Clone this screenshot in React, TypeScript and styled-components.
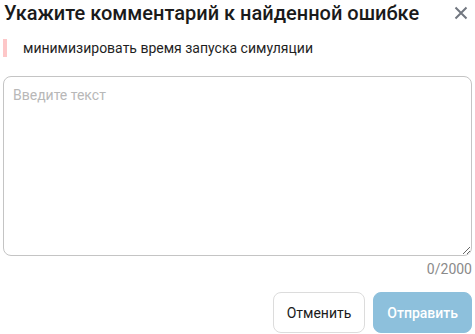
import { useState } from 'react';
import styled, { createGlobalStyle } from 'styled-components';

const GlobalStyle = createGlobalStyle`
  body {
    margin: 0;
    background: #ffffff;
    font-family: Roboto, 'Noto Sans', sans-serif;
  }
`;

const MAX_LENGTH = 2000;

export default function App() {
  const [comment, setComment] = useState('');

  return (
    <>
      <GlobalStyle />
      <S.Dialog>
        <S.Header>
          <h2 className="title">Укажите комментарий к найденной ошибке</h2>
          <S.CloseButton aria-label="Закрыть">
            <svg width="14" height="14" viewBox="0 0 14 14" fill="none">
              <path d="M1.5 1.5L12.5 12.5M12.5 1.5L1.5 12.5" stroke="currentColor" strokeWidth="2" />
            </svg>
          </S.CloseButton>
        </S.Header>
        <S.Quote>минимизировать время запуска симуляции</S.Quote>
        <S.TextArea
          placeholder="Введите текст"
          value={comment}
          maxLength={MAX_LENGTH}
          onChange={(e) => setComment(e.target.value)}
        />
        <S.Counter>
          {comment.length}/{MAX_LENGTH}
        </S.Counter>
        <S.Footer>
          <S.Button>Отменить</S.Button>
          <S.Button $primary disabled={!comment.length}>
            Отправить
          </S.Button>
        </S.Footer>
      </S.Dialog>
    </>
  );
}

const S = {
  Dialog: styled.div`
    display: flex;
    flex-direction: column;
    width: 469px;
    padding: 0 3px;
  `,
  Header: styled.div`
    display: flex;
    justify-content: space-between;
    align-items: center;
    height: 26px;
    .title {
      margin: 0 0 0 1px;
      font-size: 20px;
      font-weight: 500;
      color: #1a1a1a;
      white-space: nowrap;
    }
  `,
  CloseButton: styled.button`
    display: flex;
    align-items: center;
    justify-content: center;
    width: 20px;
    height: 20px;
    margin-right: 1px;
    padding: 0;
    border: none;
    background: none;
    color: #727780;
    cursor: pointer;
  `,
  Quote: styled.div`
    margin-top: 13px;
    padding: 1px 0 1px 16px;
    border-left: 4px solid #fdc7c8;
    font-size: 14px;
    line-height: 16px;
    color: #1f1f1f;
  `,
  TextArea: styled.textarea`
    box-sizing: border-box;
    margin-top: 19px;
    width: 469px;
    height: 180px;
    padding: 10px 9px;
    border: 1px solid #c4c4c4;
    border-radius: 8px;
    font-family: Roboto, 'Noto Sans', sans-serif;
    font-size: 14px;
    color: #1f1f1f;
    resize: vertical;
    outline: none;
    &::placeholder {
      color: #b8b8b8;
    }
  `,
  Counter: styled.div`
    margin-top: 5px;
    text-align: right;
    font-size: 14px;
    line-height: 16px;
    color: #8a8a8a;
  `,
  Footer: styled.div`
    display: flex;
    justify-content: flex-end;
    gap: 8px;
    margin-top: 15px;
  `,
  Button: styled.button<{ $primary?: boolean }>`
    height: 41px;
    padding: 0 13px;
    border-radius: 8px;
    border: 1px solid ${(p) => (p.$primary ? '#8dc0dc' : '#dcdcdc')};
    background: ${(p) => (p.$primary ? '#8dc0dc' : '#ffffff')};
    color: ${(p) => (p.$primary ? '#ffffff' : '#1a1a1a')};
    font-family: Roboto, 'Noto Sans', sans-serif;
    font-size: 14px;
    font-weight: ${(p) => (p.$primary ? 500 : 400)};
    cursor: pointer;
    &:disabled {
      cursor: default;
    }
  `,
};
